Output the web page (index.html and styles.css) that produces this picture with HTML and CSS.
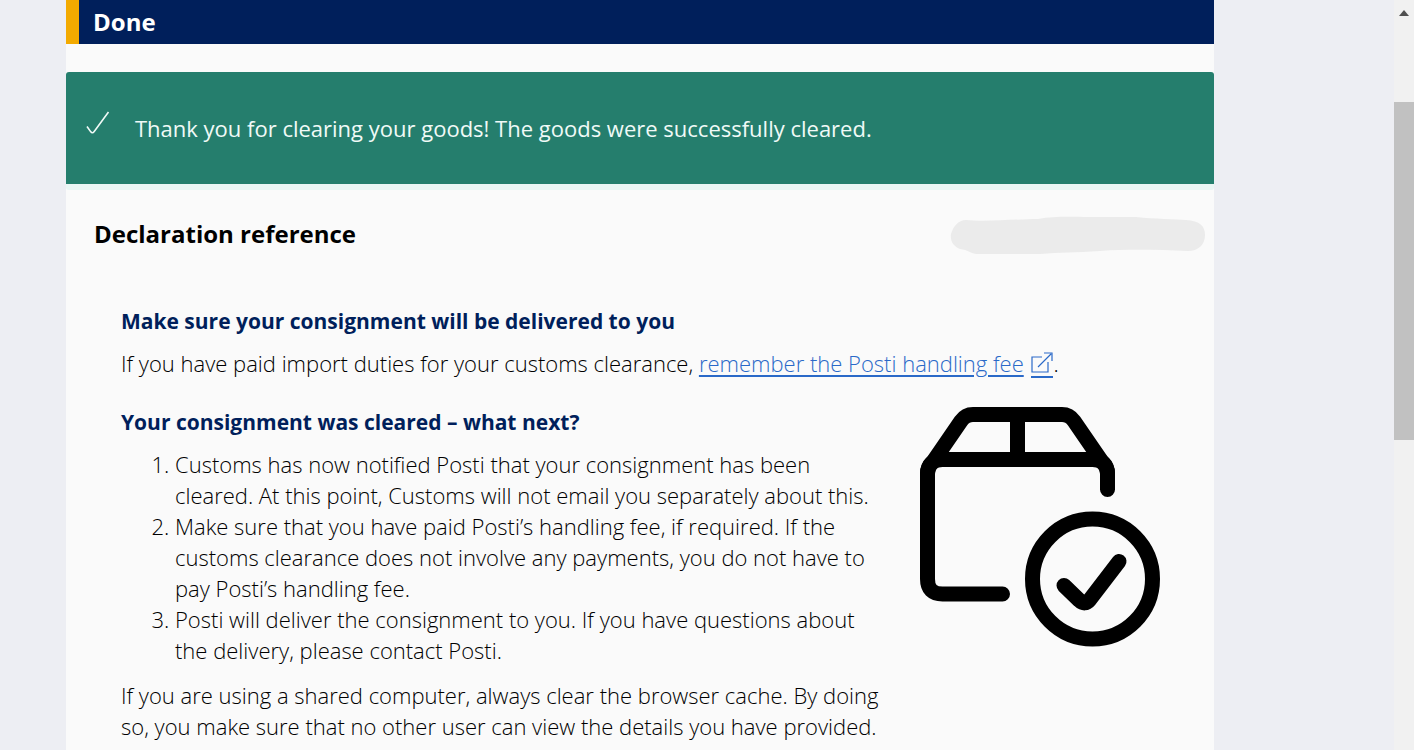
FILE: index.html
```html
<!DOCTYPE html>
<html lang="en">
<head>
    <meta charset="UTF-8">
    <meta name="viewport" content="width=device-width, initial-scale=1.0">
    <title>Customs clearance - Done</title>
    <link rel="stylesheet" href="styles.css">
</head>
<body>
    <div class="page">
        <main class="content">
            <h1 class="title">Done</h1>

            <div class="alert" role="status">
                <svg class="alert-icon" viewBox="0 0 24 24" aria-hidden="true">
                    <path d="M1 15.5 L4.6 20.6 Q6.4 23 8.2 20.6 L22.5 1"/>
                </svg>
                <p>Thank you for clearing your goods! The goods were successfully cleared.</p>
            </div>

            <div class="reference">
                <h2>Declaration reference</h2>
                <!-- hidden reference number -->
                <svg class="redacted" viewBox="0 0 256 40" aria-hidden="true">
                    <path d="M16 4 C35 6 70 3 88 3 C105 0 120 1 140 1 L186 1 C205 3 225 3 236 4 C250 5 255 10 255 19 C255 29 248 35 238 35 C210 34 180 33 150 35 C125 37 110 36 90 38 L26 38 C20 37 18 34 10 33 C3 30 0 25 1 18 C3 11 8 4 16 4 Z"/>
                </svg>
            </div>

            <section class="info">
                <h3>Make sure your consignment will be delivered to you</h3>
                <p>If you have paid import duties for your customs clearance, <a href="#">remember the Posti handling fee</a> <a class="external" href="#" aria-label="Opens in a new tab"><svg viewBox="0 0 22 22" aria-hidden="true"><path d="M11 5 H1 V20 H17 V10 M7 15 L20 2 M13 1 H21 V9"/></svg></a>.</p>

                <div class="next">
                    <div class="steps">
                        <h3>Your consignment was cleared – what next?</h3>
                        <ol>
                            <li>Customs has now notified Posti that your consignment has been cleared. At this point, Customs will not email you separately about this.</li>
                            <li>Make sure that you have paid Posti’s handling fee, if required. If the customs clearance does not involve any payments, you do not have to pay Posti’s handling fee.</li>
                            <li>Posti will deliver the consignment to you. If you have questions about the delivery, please contact Posti.</li>
                        </ol>
                        <p>If you are using a shared computer, always clear the browser cache. By doing so, you make sure that no other user can view the details you have provided.</p>
                    </div>
                    <svg class="package" viewBox="0 0 240 240" aria-hidden="true">
                        <path d="M82.5 187 H22.5 Q7.5 187 7.5 172 V66 Q7.5 60 12.5 55.5 L41 14 Q45.5 7.5 53 7.5 H142 Q149.5 7.5 154 14 L182.5 55.5 Q187.5 60 187.5 66 V82.5"/>
                        <path d="M7.5 67.5 Q7.5 52.5 22.5 52.5 H172.5 Q187.5 52.5 187.5 67.5 M97.5 8 V52"/>
                        <circle cx="172.5" cy="172" r="60"/>
                        <path d="M144 178.5 L159.5 193.5 Q165 198.5 169.5 193 L199 154.5"/>
                    </svg>
                </div>
            </section>
        </main>

        <div class="scrollbar" aria-hidden="true">
            <span class="arrow"></span>
            <span class="thumb"></span>
        </div>
    </div>
</body>
</html>
```
FILE: styles.css
```css
* {
    box-sizing: border-box;
}
body {
    margin: 0;
    background: #edeef3;
    color: #000;
    font-family: "Open Sans", "Noto Sans", sans-serif;
    font-size: 22px;
    line-height: 31px;
}
h1, h2, h3, p, ol {
    margin: 0;
}
.page {
    display: flex;
    min-height: 100vh;
}
.content {
    flex: 1;
    margin: 0 180px 0 66px;
    background: #fafafa;
}
.title {
    padding: 0 14px;
    border-left: 13px solid #f3aa00;
    background: #001f5b;
    color: #fff;
    font-size: 24px;
    line-height: 44px;
}
.alert {
    display: flex;
    align-items: center;
    gap: 25px;
    height: 118px;
    margin-top: 28px;
    padding: 0 20px;
    border-bottom: 6px solid #eaf6f4;
    border-radius: 3px;
    background: #257e6d;
    color: #f0faf7;
}
.alert-icon {
    width: 24px;
    height: 24px;
    margin-bottom: 10px;
    fill: none;
    stroke: #f0faf7;
    stroke-width: 1.6;
}
.reference {
    display: flex;
    justify-content: space-between;
    align-items: flex-start;
    padding: 26px 8px 50px 28px;
}
.reference h2 {
    font-size: 24px;
    line-height: 36px;
}
.redacted {
    width: 256px;
    height: 40px;
    fill: #ebebeb;
}
.info {
    padding: 0 54px 0 55px;
    font-weight: 300;
}
.info h3 {
    margin-bottom: 11px;
    color: #001f5b;
    font-size: 21px;
    font-weight: 700;
}
a {
    color: #2a69c8;
    text-decoration-thickness: 2px;
    text-underline-offset: 3px;
}
.external {
    display: inline-block;
    height: 26px;
    margin-left: 2px;
    border-bottom: 2px solid #2a69c8;
    line-height: 1;
    vertical-align: -6px;
}
.external svg {
    display: block;
    width: 22px;
    height: 22px;
    fill: none;
    stroke: #2a69c8;
    stroke-width: 1.2;
}
.next {
    display: flex;
    gap: 32px;
    margin-top: 28px;
}
.steps {
    flex: 1;
}
.steps ol {
    margin-bottom: 14px;
    padding-left: 54px;
}
.package {
    flex: none;
    width: 240px;
    height: 240px;
    fill: none;
    stroke: #000;
    stroke-width: 15;
    stroke-linecap: round;
    stroke-linejoin: round;
}
.scrollbar {
    width: 20px;
    background: #f1f1f1;
}
.arrow {
    display: block;
    width: 0;
    margin: 10px auto 86px;
    border: 5px solid transparent;
    border-top: 0;
    border-bottom: 6px solid #505050;
}
.thumb {
    display: block;
    height: 338px;
    background: #c1c1c1;
}
```
